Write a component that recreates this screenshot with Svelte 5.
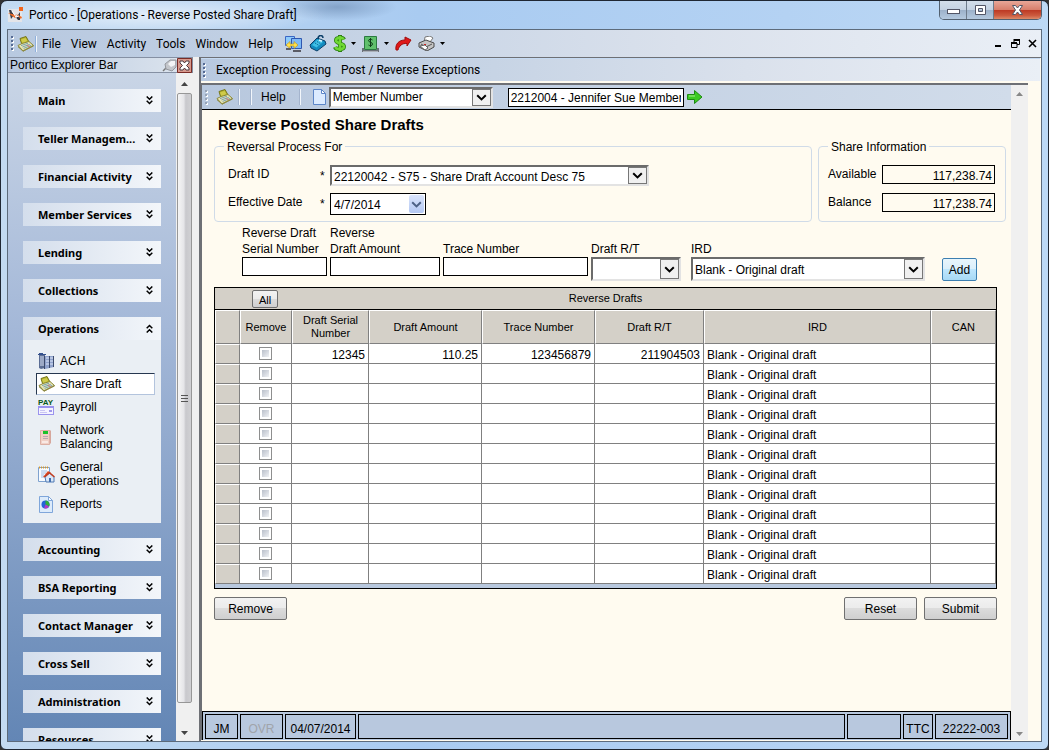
<script>
    let sections = [
        { name: 'Main' },
        { name: 'Teller Managem...' },
        { name: 'Financial Activity' },
        { name: 'Member Services' },
        { name: 'Lending' },
        { name: 'Collections' },
        { name: 'Operations', open: true },
        { name: 'Accounting' },
        { name: 'BSA Reporting' },
        { name: 'Contact Manager' },
        { name: 'Cross Sell' },
        { name: 'Administration' },
        { name: 'Resources' }
    ];

    let operations = ['ACH', 'Share Draft', 'Payroll', 'Network Balancing', 'General Operations', 'Reports'];
    let current = 'Share Draft';

    let searchBy = 'Member Number';
    let member = '2212004 - Jennifer Sue Member';
    let draftId = '22120042 - S75 - Share Draft Account Desc 75';
    let effectiveDate = '4/7/2014';
    let available = '117,238.74';
    let balance = '117,238.74';

    let serial = '';
    let amount = '';
    let trace = '';
    let routing = '';
    let ird = 'Blank - Original draft';

    const emptyRow = () => ({ checked: false, serial: '', amount: '', trace: '', routing: '', ird: 'Blank - Original draft' });

    let rows = Array.from({ length: 12 }, emptyRow);
    rows[0] = { ...emptyRow(), serial: '12345', amount: '110.25', trace: '123456879', routing: '211904503' };

    function addDraft() {
        const i = rows.findIndex((r) => !r.serial);
        if (i < 0 || !serial) return;
        rows[i] = { checked: false, serial, amount, trace, routing, ird };
        serial = amount = trace = routing = '';
    }

    function selectAll() {
        rows = rows.map((r) => ({ ...r, checked: true }));
    }

    function removeChecked() {
        rows = rows.map((r) => (r.checked ? emptyRow() : r));
    }

    function reset() {
        rows = rows.map(emptyRow);
    }
</script>

{#snippet draftIcon()}
    <svg width="17" height="16" viewBox="0 0 17 16" aria-hidden="true">
        <path d="M3 2.5 9 .5l3 5.5-7 3z" fill="#b5b32c" stroke="#77761b" />
        <path d="M4 3.4 8.6 2l1.7 3-5 2z" fill="#cfcb4a" />
        <path d="M1 9.5 5 7.5 12 5.5l4.5 4L6 15.2z" fill="#e9e6b4" stroke="#8a8838" />
        <path d="M1 9.7v1.6l5 4.2 10.5-5v-1.4L6 14.2z" fill="#8e8b46" />
        <path d="m4 9.6 7-2.4M5.4 11l7.4-2.7M6.6 12.4l7.6-3" stroke="#77a0b0" />
        <path d="m10 9 3 2" stroke="#d67a74" />
    </svg>
{/snippet}

{#snippet chevron()}
    <svg width="11" height="7" viewBox="0 0 11 7" aria-hidden="true">
        <path d="m1.2 1.2 4.3 4.2 4.3-4.2" fill="none" stroke="currentColor" stroke-width="2" />
    </svg>
{/snippet}

{#snippet caret()}
    <svg width="5" height="3" viewBox="0 0 5 3" aria-hidden="true"><path d="M0 0h5L2.500 3z" fill="#000" /></svg>
{/snippet}

{#snippet grip()}
    <svg class="grip" width="3" height="15" viewBox="0 0 3 15" aria-hidden="true">
        <path d="M1 1h2v2H1zm0 4h2v2H1zm0 4h2v2H1zm0 4h2v2H1z" fill="#fff" />
        <path d="M0 0h2v2H0zm0 4h2v2H0zm0 4h2v2H0zm0 4h2v2H0z" fill="currentColor" />
    </svg>
{/snippet}

{#snippet navIcon(name)}
    <svg width="17" height="17" viewBox="0 0 17 17" aria-hidden="true">
        {#if name === 'ACH'}
            <path d="M1 1h6v14l-4 1-2-1z" fill="#5b6d94" />
            <path d="M7 3h9v11l-9 2z" fill="#8fa2cc" />
            <path d="M2 4h4M2 6h4M2 8h4M2 10h4M2 12h4M8 5h3M8 8h3M8 11h3M12 5h3M12 8h3M12 11h3" stroke="#dfe7f7" />
            <path d="M6.500 3v13M11.500 3v12M15.500 3v11" stroke="#3c4a6c" />
            <path d="M0 1.500h8M1 .5h4" stroke="#34508c" />
        {:else if name === 'Payroll'}
            <text x="0" y="6" font-family="Liberation Sans" font-size="8" font-weight="700" fill="#0b5a1c">PAY</text>
            <rect x=".5" y="7.500" width="15" height="8" fill="#f4f3ff" stroke="#9a93ee" />
            <path d="M1 8.500h14" stroke="#9a93ee" />
            <path d="M2 11.500h5M2 13.500h7" stroke="#c9c5f2" />
            <path d="M11 11h3v2h-3z" fill="#a098ea" />
        {:else if name === 'Network Balancing'}
            <path d="M3 1h9l1 1v12l-2 2H3z" fill="#d6a79c" />
            <path d="M2.500 1.500h9v14h-9z" fill="#f0d0c6" stroke="#dcb0a5" />
            <path d="M5 2h5v3H5z" fill="#19c22a" />
            <path d="M5 7.500h5M5 9.500h5" stroke="#b9a8b4" />
            <path d="M4 12h6v2H4z" fill="#f9e9e4" />
        {:else if name === 'General Operations'}
            <path d="M.5 1.500h11v14H.5z" fill="#f7fbff" stroke="#7fa2cf" />
            <path d="M1 1.500h10" stroke="#d89a2c" stroke-width="2" stroke-dasharray="1 1" />
            <path d="M3 5h6M3 7h5M3 9h3M3 11h3" stroke="#9fbbe0" />
            <path d="M5 11 10 5l3 2-3 5z" fill="#dc4a22" />
            <path d="m7 11 4.500-4L16 11v5H8z" fill="#dbe7f6" stroke="#4e7ab5" />
            <path d="m6.500 11 5-4.300 5 4.300" fill="none" stroke="#c43c1e" stroke-width="1.500" />
            <path d="M11 12h2v4h-2z" fill="#4470b0" />
        {:else if name === 'Reports'}
            <path d="M1.500.5h9l4 4v12h-13z" fill="#dcebfb" stroke="#7fa6da" />
            <path d="M10.500.5v4h4z" fill="#fff" stroke="#7fa6da" />
            <circle cx="7.500" cy="8.500" r="4" fill="#2563d8" />
            <path d="M7.500 8.500v-4a4 4 0 0 1 3.500 6z" fill="#2fae3a" />
            <path d="m7.500 8.500 3.500 2a4 4 0 0 1-5 1.700z" fill="#b43ac2" />
        {/if}
    </svg>
{/snippet}

<div class="window">
    <header class="titlebar">
        <svg width="16" height="16" viewBox="0 0 16 16" aria-hidden="true">
            <path d="M0 2h14v13H0z" fill="#e4e5e8" />
            <path d="M1 3h2l5 8 4-6v8h-2l-4-5-3 4z" fill="#3b3e46" />
            <path d="M0 6l8 2-1 3zM8 7l6 3-1 2z" fill="#ee6a24" />
            <path d="M4 4l4 6 3-1" stroke="#fff" fill="none" />
            <path d="M11 0h4v4h-4z" fill="#f2641c" />
        </svg>
        <h1>Portico - [Operations - Reverse Posted Share Draft]</h1>
        <div class="controls">
            <button aria-label="Minimize">
                <svg width="13" height="12" viewBox="0 0 13 12"><rect x=".5" y="5.500" width="12" height="4" fill="#fff" stroke="#535666" /></svg>
            </button>
            <button aria-label="Maximize">
                <svg width="13" height="12" viewBox="0 0 13 12"><path d="M1.500 1.500h10v9h-10zm3 3v3h4v-3z" fill="#fff" fill-rule="evenodd" stroke="#535666" /></svg>
            </button>
            <button class="close" aria-label="Close">
                <svg width="13" height="12" viewBox="0 0 13 12"><path d="M1.500 1.500h3l2 2.500 2-2.500h3L8.500 6l3 4.500h-3l-2-2.500-2 2.500h-3l3-4.500z" fill="#fff" stroke="#535666" /></svg>
            </button>
        </div>
    </header>

    <div class="client">
        <nav class="menubar">
            {@render grip()}
            {@render draftIcon()}
            <span class="line"></span>
            <div class="menus">
                <button>File</button>
                <button>View</button>
                <button>Activity</button>
                <button>Tools</button>
                <button>Window</button>
                <button>Help</button>
            </div>
            <div class="tools">
                <button aria-label="Transfer">
                    <svg width="18" height="16" viewBox="0 0 18 16">
                        <path d="M.5.5h9v9h-9z" fill="#8ecbfb" stroke="#3a66c4" />
                        <path d="M6.500 2.500h10v10h-10z" fill="#7db9f6" stroke="#2f57b0" />
                        <path d="m1 9 4-3.500V8h4V5.500L13 9l-4 3.500V10H5v2.500z" fill="#ffe14a" stroke="#b98f1a" stroke-width=".6" />
                        <path d="M1 12h5v2H1zM8 14h8v2H8z" fill="#5a5c66" />
                    </svg>
                </button>
                <button aria-label="Calculator">
                    <svg width="18" height="17" viewBox="0 0 18 17">
                        <path d="M1 10 8 3l8 3 1 3-9 7-6-3z" fill="#128bbf" stroke="#0d3f68" />
                        <path d="m3 10 5.500-5.500L14 7l-6.500 5.500z" fill="#3fc0e6" />
                        <path d="M9 4c0-5 5-4 5-1" fill="none" stroke="#0d3f68" stroke-width="1.500" />
                        <path d="m6 8 4 2.500M8 6.500l4 2.500" stroke="#0f6796" stroke-dasharray="1.500 1" />
                        <path d="m10 5 3 1.300" stroke="#d8f5ff" stroke-width="1.500" />
                    </svg>
                </button>
                <button class="drop" aria-label="Cash">
                    <svg width="13" height="17" viewBox="0 0 13 17">
                        <path d="M11 4.500C10 2 3 2 3 5.500S11 8 11 11.500 3 15 2 12M7 0v17" fill="none" stroke="#2b7d12" stroke-width="4" />
                        <path d="M10.500 4.500C10 2 3 2 3 5.500S11 8 11 11.500 3 15 2.500 12M7 1v15" fill="none" stroke="#6fd834" stroke-width="2.500" />
                    </svg>
                    {@render caret()}
                </button>
                <button class="drop" aria-label="Deposits">
                    <svg width="17" height="16" viewBox="0 0 17 16">
                        <path d="M2.500.5h12v13h-12z" fill="#5fc06c" stroke="#2a7a40" />
                        <path d="M10.500 4C9.500 3 6.500 3 6.500 4.700s4 1.300 4 3.300-3 2-4 1M8.500 2v9" fill="none" stroke="#0f3d1a" />
                        <path d="M0 12h2v2h13v-2h2v4H0z" fill="#6a7078" /><path d="M1 15h15v1H1z" fill="#aab0b8" />
                    </svg>
                    {@render caret()}
                </button>
                <button aria-label="Forward">
                    <svg width="17" height="15" viewBox="0 0 17 15"><path d="M1 14C0 8 4 4 10 4V1l6 3-4 6V7.500C7 7 4 10 3 14z" fill="#e01818" stroke="#a00d0d" /></svg>
                </button>
                <button class="drop" aria-label="Print">
                    <svg width="17" height="15" viewBox="0 0 17 15">
                        <path d="m7 1 5-1 3 2-3 4-6 1z" fill="#fff" stroke="#777" />
                        <path d="m1 7 7-3 8 3v4l-7 4-8-4z" fill="#c4c4c4" stroke="#4a4a4a" />
                        <path d="m3 8 5 3 6-3" fill="none" stroke="#555" />
                        <path d="m2 10 5-1 3 3-3 2z" fill="#fff" stroke="#666" />
                        <path d="M6 8h2v1H6z" fill="#c22" />
                    </svg>
                    {@render caret()}
                </button>
            </div>
            <div class="mdi">
                <button aria-label="Minimize form"><svg width="9" height="9" viewBox="0 0 9 9"><path d="M1 6h6v2H1z" /></svg></button>
                <button aria-label="Restore form"><svg width="9" height="9" viewBox="0 0 9 9"><path d="M3 1h5.500v4.500H6M3 0v3M.5 4h5.500v4.500H.5z" fill="none" stroke="#000" /><path d="M3 0h6v2H3zM0 3h6v2H0z" /></svg></button>
                <button aria-label="Close form"><svg width="9" height="9" viewBox="0 0 9 9"><path d="m1 1 7 7M8 1 1 8" stroke="#000" stroke-width="1.600" /></svg></button>
            </div>
        </nav>

        <div class="body">
            <aside>
                <div class="bar-title">
                    <span>Portico Explorer Bar</span>
                    <button aria-label="Pin">
                        <svg width="15" height="13" viewBox="0 0 15 13">
                            <path d="M1 12 5 8" stroke="#777" stroke-width="1.500" />
                            <path d="M3 5l5-4 6 0v7l-4 4-6-2z" fill="#c3c6cb" stroke="#94979d" />
                            <path d="m6 5 3-3 4 0v4l-4 2z" fill="#f3f4f6" />
                        </svg>
                    </button>
                    <button aria-label="Close explorer bar">
                        <svg width="15" height="15" viewBox="0 0 15 15">
                            <path d="M.5.5h14v14H.5z" fill="#d7998d" stroke="#7b2c26" />
                            <path d="M3 3h3l1.500 2L9 3h3v2L9.500 7.500 12 10v2H9l-1.500-2L6 12H3v-2l2.500-2.500L3 5z" fill="#fff" stroke="#4e3a40" />
                        </svg>
                    </button>
                </div>
                <div class="explorer">
                    <div class="sections">
                        {#each sections as section}
                            <section>
                                <button class="section-head">
                                    <span>{section.name}</span>
                                    <svg class:up={section.open} width="7" height="9" viewBox="0 0 7 9" aria-hidden="true">
                                        <path d="m.7.5 2.800 2.800L6.300.5M.7 4.700l2.800 2.800 2.800-2.800" fill="none" stroke="#000" stroke-width="1.500" />
                                    </svg>
                                </button>
                                {#if section.open}
                                    <ul>
                                        {#each operations as item}
                                            <li>
                                                <a href="#{item}" class:current={item === current}>
                                                    {#if item === 'Share Draft'}
                                                        {@render draftIcon()}
                                                    {:else}
                                                        {@render navIcon(item)}
                                                    {/if}
                                                    <span>{item}</span>
                                                </a>
                                            </li>
                                        {/each}
                                    </ul>
                                {/if}
                            </section>
                        {/each}
                    </div>
                    <div class="scroll">
                        <svg width="7" height="4" viewBox="0 0 7 4"><path d="M0 4h7L3.500 0z" fill="#444" /></svg>
                        <div class="thumb"><i></i><i></i><i></i></div>
                        <svg width="7" height="4" viewBox="0 0 7 4"><path d="M0 0h7L3.500 4z" fill="#444" /></svg>
                    </div>
                </div>
            </aside>

            <main>
                <nav class="subbar">
                    {@render grip()}
                    <button>Exception Processing</button>
                    <button>Post / Reverse Exceptions</button>
                </nav>

                <div class="frame">
                    <div class="page">
                        <div class="toolbar">
                            {@render grip()}
                            {@render draftIcon()}
                            <span class="line"></span>
                            <span class="line"></span>
                            <button class="help">Help</button>
                            <span class="line"></span>
                            <svg width="15" height="16" viewBox="0 0 15 16" aria-hidden="true">
                                <path d="M1.500.5h8l4 4v11h-12z" fill="#dcebff" stroke="#5d86c8" />
                                <path d="M9.500.5v4h4z" fill="#fff" stroke="#5d86c8" />
                            </svg>
                            <div class="select search-by">
                                <select aria-label="Search by" bind:value={searchBy}><option>Member Number</option></select>
                                <span class="arrow">{@render chevron()}</span>
                            </div>
                            <input class="box member" aria-label="Member" bind:value={member} />
                            <button aria-label="Go">
                                <svg width="16" height="14" viewBox="0 0 16 14"><path d="M.5 4.500h7v-4L15 7l-7.500 6.500v-4h-7z" fill="#3ccb22" stroke="#1d8a12" /><path d="M2 6h6" stroke="#a4f08c" /></svg>
                            </button>
                        </div>

                        <div class="content">
                            <h2>Reverse Posted Share Drafts</h2>

                            <div class="groups">
                                <fieldset class="reversal">
                                    <legend>Reversal Process For</legend>
                                    <div class="field">
                                        <label for="draftId">Draft ID</label>
                                        <span class="star">*</span>
                                        <div class="select draft-id">
                                            <select id="draftId" bind:value={draftId}><option>22120042 - S75 - Share Draft Account Desc 75</option></select>
                                            <span class="arrow">{@render chevron()}</span>
                                        </div>
                                    </div>
                                    <div class="field">
                                        <label for="effectiveDate">Effective Date</label>
                                        <span class="star">*</span>
                                        <div class="date">
                                            <input id="effectiveDate" bind:value={effectiveDate} />
                                            <button aria-label="Open calendar">{@render chevron()}</button>
                                        </div>
                                    </div>
                                </fieldset>
                                <fieldset class="share">
                                    <legend>Share Information</legend>
                                    <div class="field">
                                        <label for="available">Available</label>
                                        <input id="available" class="box readonly" readonly value={available} />
                                    </div>
                                    <div class="field">
                                        <label for="balance">Balance</label>
                                        <input id="balance" class="box readonly" readonly value={balance} />
                                    </div>
                                </fieldset>
                            </div>

                            <div class="entry">
                                <div class="col serial">
                                    <label for="serial">Reverse Draft<br />Serial Number</label>
                                    <input id="serial" class="box" bind:value={serial} />
                                </div>
                                <div class="col amount">
                                    <label for="amount">Reverse<br />Draft Amount</label>
                                    <input id="amount" class="box" bind:value={amount} />
                                </div>
                                <div class="col trace">
                                    <label for="trace">Trace Number</label>
                                    <input id="trace" class="box" bind:value={trace} />
                                </div>
                                <div class="col routing">
                                    <label for="routing">Draft R/T</label>
                                    <div class="select">
                                        <select id="routing" bind:value={routing}><option value=""></option><option>211904503</option></select>
                                        <span class="arrow">{@render chevron()}</span>
                                    </div>
                                </div>
                                <div class="col ird">
                                    <label for="ird">IRD</label>
                                    <div class="select">
                                        <select id="ird" bind:value={ird}><option>Blank - Original draft</option></select>
                                        <span class="arrow">{@render chevron()}</span>
                                    </div>
                                </div>
                                <button class="btn add" on:click={addDraft}>Add</button>
                            </div>

                            <div class="grid">
                                <table>
                                    <colgroup>
                                        <col class="c-head" />
                                        <col class="c-remove" />
                                        <col class="c-serial" />
                                        <col class="c-amount" />
                                        <col class="c-amount" />
                                        <col class="c-routing" />
                                        <col />
                                        <col class="c-can" />
                                    </colgroup>
                                    <thead>
                                        <tr class="band">
                                            <th colspan="8">
                                                <div>
                                                    <button class="btn all" on:click={selectAll}>All</button>
                                                    <span>Reverse Drafts</span>
                                                </div>
                                            </th>
                                        </tr>
                                        <tr class="heads">
                                            <th></th>
                                            <th>Remove</th>
                                            <th>Draft Serial Number</th>
                                            <th>Draft Amount</th>
                                            <th>Trace Number</th>
                                            <th>Draft R/T</th>
                                            <th>IRD</th>
                                            <th>CAN</th>
                                        </tr>
                                    </thead>
                                    <tbody>
                                        {#each rows as row, i}
                                            <tr>
                                                <th></th>
                                                <td class="check"><input type="checkbox" aria-label="Remove row {i + 1}" bind:checked={row.checked} /></td>
                                                <td class="num">{row.serial}</td>
                                                <td class="num">{row.amount}</td>
                                                <td class="num">{row.trace}</td>
                                                <td class="num">{row.routing}</td>
                                                <td>{row.ird}</td>
                                                <td></td>
                                            </tr>
                                        {/each}
                                    </tbody>
                                </table>
                            </div>

                            <div class="actions">
                                <button class="btn" on:click={removeChecked}>Remove</button>
                                <span></span>
                                <button class="btn" on:click={reset}>Reset</button>
                                <button class="btn">Submit</button>
                            </div>
                        </div>

                        <footer>
                            <span class="jm">JM</span>
                            <span class="ovr">OVR</span>
                            <span class="today">04/07/2014</span>
                            <span class="message"></span>
                            <span class="blank"></span>
                            <span class="ttc">TTC</span>
                            <span class="code">22222-003</span>
                        </footer>
                    </div>
                    <div class="page-scroll">
                        <svg width="7" height="4" viewBox="0 0 7 4"><path d="M0 4h7L3.500 0z" fill="#888" /></svg>
                        <svg width="7" height="4" viewBox="0 0 7 4"><path d="M0 0h7L3.500 4z" fill="#888" /></svg>
                    </div>
                </div>
            </main>
        </div>
    </div>
</div>

<style>
    :global(body) {
        background: #333;
    }
    .window {
        --menu: Roboto, 'Open Sans', sans-serif;
        --bold: 'Noto Sans', 'Open Sans', sans-serif;
        --form: 'Liberation Sans', Arial, sans-serif;
        box-sizing: border-box;
        height: 100vh;
        display: flex;
        flex-direction: column;
        padding: 0 6px 7px;
        border: 1px solid #1f2733;
        border-radius: 7px 7px 6px 6px;
        background: linear-gradient(90deg, #c3daf1, #a9cbf1 40%, #b4d2f3 75%, #bdd9f5);
        font-family: var(--form);
        font-size: 12px;
        color: #000;
        overflow: hidden;
    }
    .window * {
        box-sizing: border-box;
    }
    button,
    input,
    select {
        font: inherit;
        color: inherit;
        margin: 0;
        padding: 0;
        border: 0;
        border-radius: 0;
        background: none;
        outline: none;
    }
    svg {
        display: block;
        flex: none;
    }

    /* title bar */
    .titlebar {
        height: 28px;
        flex: none;
        display: flex;
        align-items: center;
        gap: 5px;
        padding-left: 1px;
        background:
            radial-gradient(ellipse 170px 20px at 150px 14px, rgba(255, 255, 255, 0.6), rgba(255, 255, 255, 0)),
            radial-gradient(ellipse 60px 14px at 330px 6px, rgba(90, 120, 160, 0.5), rgba(90, 120, 160, 0));
    }
    h1 {
        margin: 0;
        flex: 1;
        font: 12px var(--menu);
        white-space: nowrap;
    }
    .controls {
        align-self: flex-start;
        display: flex;
        height: 19px;
        border: 1px solid #52606f;
        border-top: 0;
        border-radius: 0 0 5px 5px;
        overflow: hidden;
    }
    .controls button {
        width: 27px;
        display: grid;
        place-items: center;
        border-right: 1px solid #6d7b8b;
        background: linear-gradient(#d3deea, #c4d2e2 48%, #9db2ca 52%, #b4c9df);
    }
    .controls .close {
        width: 47px;
        border-right: 0;
        background: linear-gradient(#e8a798, #d87f6c 48%, #bd3a24 52%, #cc5a3e 80%, #dd8a68);
    }

    .client {
        flex: 1;
        min-height: 0;
        display: flex;
        flex-direction: column;
        border: 1px solid #5d6b7b;
        background: #fffbf0;
    }
    .menubar {
        height: 27px;
        flex: none;
        display: flex;
        align-items: center;
        padding: 0 4px 0 3px;
        font: 12px var(--menu);
        background: linear-gradient(90deg, #b8c9e0, #c3d1e4 30%, #dae1ec 65%, #eaeff6);
    }
    .grip {
        color: #566b94;
        margin-right: 3px;
    }
    .line {
        width: 2px;
        height: 16px;
        border-left: 1px solid #8fb0dc;
        border-right: 1px solid #f2f6fb;
    }
    .menubar .line {
        margin: 0 5px 0 1px;
    }
    .menus {
        display: flex;
        gap: 10px;
    }
    .tools {
        display: flex;
        align-items: center;
        gap: 6px;
        margin-left: 12px;
    }
    .drop {
        display: flex;
        align-items: center;
        gap: 5px;
    }
    .mdi {
        display: flex;
        gap: 8px;
        margin-left: auto;
    }
    .body {
        flex: 1;
        min-height: 0;
        display: flex;
    }

    /* explorer bar */
    aside {
        width: 193px;
        flex: none;
        display: flex;
        flex-direction: column;
        border-right: 2px solid #6e7075;
        background: #f0f0f0;
    }
    .bar-title {
        height: 16px;
        flex: none;
        display: flex;
        align-items: center;
        width: 185px;
        padding-left: 2px;
        border: 1px solid #8590a3;
        border-width: 1px 1px 1px 0;
        background: linear-gradient(90deg, #b7c7df, #dde5ee);
    }
    .bar-title span {
        flex: 1;
    }
    .explorer {
        flex: 1;
        min-height: 0;
        display: flex;
    }
    .sections {
        width: 168px;
        padding: 16px 15px 0;
        overflow: hidden;
        background: linear-gradient(#c9d5e6, #a4b8d8 38%, #6386b5);
    }
    section {
        margin-bottom: 15px;
    }
    .section-head {
        width: 100%;
        height: 23px;
        display: flex;
        align-items: center;
        justify-content: space-between;
        padding: 0 8px 0 15px;
        background: linear-gradient(90deg, #d4deec, #f3f6fa);
        font: bold 11px var(--bold);
        white-space: nowrap;
    }
    .up {
        transform: rotate(180deg);
    }
    ul {
        display: flex;
        flex-direction: column;
        gap: 1px;
        margin: 0;
        padding: 10px 6px 8px 13px;
        list-style: none;
        background: #eaeff4;
    }
    a {
        display: flex;
        align-items: center;
        gap: 5px;
        padding: 1px 0 1px 1px;
        border: 1px solid transparent;
        line-height: 14px;
        color: #000;
        text-decoration: none;
    }
    a span {
        padding: 2px 0;
    }
    a.current {
        border-color: #26374f #b3c4dd #b3c4dd #26374f;
        background: #fff;
    }
    .scroll {
        width: 16px;
        display: flex;
        flex-direction: column;
        align-items: center;
        gap: 7px;
        padding: 9px 0 6px;
        background: #f0f0f0;
    }
    .thumb {
        flex: 1;
        width: 15px;
        margin-bottom: 21px;
        display: flex;
        flex-direction: column;
        align-items: center;
        justify-content: center;
        gap: 2px;
        border: 1px solid #979797;
        border-radius: 2px;
        background: linear-gradient(90deg, #f5f5f5, #e5e5e8 45%, #c8c8cc 60%, #d0d0d3);
    }
    .thumb i {
        width: 7px;
        height: 1px;
        background: #555;
    }

    /* form window */
    main {
        flex: 1;
        min-width: 0;
        display: flex;
        flex-direction: column;
        border-top: 1px solid #6e7075;
        padding-right: 1px;
    }
    .subbar {
        height: 23px;
        flex: none;
        display: flex;
        align-items: center;
        gap: 10px;
        padding-left: 2px;
        border-top: 1px solid #c5daf3;
        font: 12px var(--menu);
        background: linear-gradient(90deg, #b8c9e0, #c7d4e5 35%, #dae1ec 65%, #eaeff6);
    }
    .subbar .grip {
        margin: 0;
    }
    .frame {
        flex: 1;
        min-height: 0;
        display: flex;
        margin: 2px 12px 1px 0;
        border-top: 2px solid #6e7075;
        border-left: 1px solid #6e7075;
    }
    .page {
        flex: 1;
        min-width: 0;
        display: flex;
        flex-direction: column;
    }
    .toolbar {
        height: 25px;
        flex: none;
        display: flex;
        align-items: center;
        padding-left: 3px;
        border-bottom: 1px solid #000;
        background: linear-gradient(90deg, #b8c8de, #d1dcea);
    }
    .toolbar .grip {
        color: #97a3b5;
        margin-right: 8px;
    }
    .toolbar .line {
        margin: 0 5px;
        border-left-color: #a4b4cd;
    }
    .help {
        margin: 0 8px 0 4px;
    }
    .toolbar > svg:nth-of-type(3) {
        margin: 0 2px 0 6px;
    }
    .search-by {
        width: 164px;
    }
    .member {
        width: 176px;
        margin: 0 3px 0 15px;
    }
    .box {
        height: 19px;
        padding: 2px 2px 0;
        border: 1px solid #000;
        background: #fff;
    }
    .select {
        height: 21px;
        display: flex;
        border: 2px solid #6b6b6b;
        border-right-color: #e3e3e3;
        border-bottom-color: #e3e3e3;
        background: #fff;
    }
    .select select {
        flex: 1;
        min-width: 0;
        appearance: none;
        padding-left: 2px;
    }
    .field .select select,
    .col .select select {
        padding-top: 2px;
    }
    .arrow {
        width: 19px;
        display: grid;
        place-items: center;
        border: 1px solid #777;
        background: #f0f0f0;
    }

    .content {
        flex: 1;
        min-height: 0;
        padding: 6px 5px 0 12px;
        line-height: 16px;
    }
    h2 {
        margin: 0 0 4px 4px;
        font-size: 15px;
        line-height: 18px;
    }
    .groups {
        display: flex;
        gap: 6px;
    }
    fieldset {
        height: 84px;
        min-width: 0;
        margin: 0;
        padding: 11px 10px 0 13px;
        border: 1px solid #d0dbe8;
        border-radius: 4px;
    }
    legend {
        margin-left: -4px;
        padding: 3px 3px 0;
        line-height: 13px;
    }
    .reversal {
        flex: 1;
    }
    .share {
        width: 188px;
        padding-left: 9px;
    }
    .share legend {
        margin-left: 0;
    }
    .field {
        display: flex;
        margin-bottom: 7px;
    }
    .field label {
        padding-top: 1px;
    }
    .reversal label {
        width: 92px;
    }
    .star {
        width: 10px;
        padding-top: 3px;
    }
    .draft-id {
        width: 319px;
    }
    .date {
        width: 96px;
        height: 22px;
        display: flex;
        align-items: center;
        padding: 0 1px 0 3px;
        border: 1px solid #000;
        background: #fff;
    }
    .date input {
        flex: 1;
        min-width: 0;
        padding-top: 2px;
    }
    .date button {
        width: 15px;
        height: 18px;
        display: grid;
        place-items: center;
        border-radius: 2px;
        background: linear-gradient(#dae4fb, #b4c8f2);
        color: #4d6185;
    }
    .share label {
        flex: 1;
    }
    .share .field {
        margin-bottom: 9px;
    }
    .readonly {
        width: 113px;
        background: #fffbf0;
        text-align: right;
    }
    .entry {
        display: flex;
        align-items: flex-end;
        gap: 3px;
        height: 59px;
        margin: 0 9px 0 28px;
    }
    .col {
        display: flex;
        flex-direction: column;
        justify-content: flex-end;
        height: 59px;
    }
    .col .box {
        margin-bottom: 5px;
    }
    .col .select {
        height: 24px;
    }
    .serial {
        width: 85px;
    }
    .amount {
        width: 110px;
    }
    .trace {
        width: 145px;
    }
    .routing {
        width: 90px;
    }
    .ird {
        width: 234px;
        margin-left: 7px;
    }
    .btn {
        min-width: 73px;
        height: 23px;
        padding-top: 1px;
        border: 1px solid #707070;
        border-radius: 2px;
        background: linear-gradient(#f2f2f2, #ebebeb 50%, #dcdcdc 50%, #cfcfcf);
    }
    .add {
        min-width: 35px;
        margin-left: 14px;
        border-color: #3c7fb1;
        background: linear-gradient(#e8f5fc, #d9effb 50%, #bee6fd 50%, #a7d9f5);
    }

    /* drafts grid */
    .grid {
        margin: 6px 9px 0 0;
        padding-bottom: 4px;
        border: 1px solid #000;
        background: #b8c8de;
    }
    table {
        width: 100%;
        table-layout: fixed;
        border-collapse: separate;
        border-spacing: 0;
        background: #fff;
    }
    .c-head {
        width: 25px;
    }
    .c-remove {
        width: 52px;
    }
    .c-serial {
        width: 77px;
    }
    .c-amount {
        width: 113px;
    }
    .c-routing {
        width: 109px;
    }
    .c-can {
        width: 65px;
    }
    th {
        padding: 0;
        font-weight: normal;
        font-size: 11px;
        background: #d4d0c8;
    }
    .band th {
        height: 22px;
        border-bottom: 1px solid #000;
    }
    .band div {
        display: grid;
        grid-template-columns: 1fr auto 1fr;
    }
    .all {
        min-width: 26px;
        width: 26px;
        height: 18px;
        margin-left: 37px;
    }
    .heads th {
        height: 34px;
        padding: 0 4px;
        line-height: 13px;
        border: 1px solid #fff;
        border-right-color: #808080;
        border-bottom-color: #808080;
    }
    tbody th {
        border: 1px solid #fff;
        border-right-color: #808080;
        border-bottom-color: #808080;
    }
    td {
        height: 20px;
        padding: 4px 3px 0;
        border-right: 1px solid #808080;
        border-bottom: 1px solid #808080;
        line-height: 15px;
        white-space: nowrap;
    }
    td.num {
        text-align: right;
    }
    td.check {
        padding: 0;
    }
    input[type='checkbox'] {
        appearance: none;
        display: block;
        width: 13px;
        height: 13px;
        margin: 0 auto;
        border: 1px solid #8e8f8f;
        background: linear-gradient(135deg, #b9bfca, #f0f2f5) content-box, #fff;
        padding: 2px;
    }
    input[type='checkbox']:checked {
        background: #35507c content-box;
    }
    .actions {
        display: flex;
        gap: 7px;
        margin: 8px 9px 0 0;
    }
    .actions span {
        flex: 1;
    }

    footer {
        height: 29px;
        flex: none;
        display: flex;
        gap: 2px;
        padding: 2px 2px 1px;
        border: 1px solid #000;
        border-bottom: 0;
        background: #b8c8de;
    }
    footer span {
        display: grid;
        place-items: center;
        padding-top: 4px;
        border: 1px solid #000;
    }
    .jm {
        width: 33px;
    }
    .ovr {
        width: 43px;
        color: #a0a4aa;
    }
    .today {
        width: 71px;
    }
    .message {
        flex: 1;
    }
    .blank {
        width: 54px;
    }
    .ttc {
        width: 30px;
    }
    .code {
        width: 73px;
    }
    .page-scroll {
        width: 17px;
        display: flex;
        flex-direction: column;
        align-items: center;
        justify-content: space-between;
        padding: 7px 0 4px;
        background: #f0f0f0;
    }
</style>
